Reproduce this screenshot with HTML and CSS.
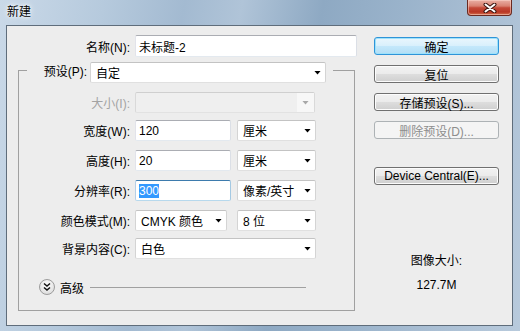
FILE: index.html
```html
<!DOCTYPE html>
<html>
<head>
  <meta charset="utf-8">
  <title>新建</title>
  <link rel="stylesheet" href="styles.css">
</head>
<body>
  <div class="window">
    <div class="titlebar">
      <span class="title">新建</span>
      <span class="close">
        <svg width="14" height="10" viewBox="0 0 14 10">
          <path d="M2.5 1.5 L11.5 8.5 M11.5 1.5 L2.5 8.5" stroke="#3b1510" stroke-width="4" stroke-linecap="round"/>
          <path d="M2.5 1.5 L11.5 8.5 M11.5 1.5 L2.5 8.5" stroke="#fff" stroke-width="2" stroke-linecap="round"/>
        </svg>
      </span>
    </div>

    <div class="client">
      <!-- 左侧表单 -->
      <div class="form">
        <div class="row name-row">
          <label class="lbl">名称(N):</label>
          <div class="field name-field">未标题-2</div>
        </div>

        <fieldset class="group">
          <legend class="group-head">
            <div class="head-inner">
              <label class="lbl head-lbl">预设(P):</label>
              <div class="combo preset-combo"><span>自定</span><i class="arrow"></i></div>
            </div>
          </legend>

          <div class="row first-row">
            <label class="lbl disabled">大小(I):</label>
            <div class="combo combo-disabled size-combo"><span></span><span class="drop"><i class="arrow"></i></span></div>
          </div>

          <div class="row">
            <label class="lbl">宽度(W):</label>
            <div class="field num-field">120</div>
            <div class="combo unit-combo"><span>厘米</span><i class="arrow"></i></div>
          </div>

          <div class="row">
            <label class="lbl">高度(H):</label>
            <div class="field num-field">20</div>
            <div class="combo unit-combo"><span>厘米</span><i class="arrow"></i></div>
          </div>

          <div class="row">
            <label class="lbl">分辨率(R):</label>
            <div class="field num-field focused"><span class="sel">300</span></div>
            <div class="combo unit-combo"><span>像素/英寸</span><i class="arrow"></i></div>
          </div>

          <div class="row">
            <label class="lbl">颜色模式(M):</label>
            <div class="combo mode-combo"><span>CMYK 颜色</span><i class="arrow"></i></div>
            <div class="combo bits-combo"><span>8 位</span><i class="arrow"></i></div>
          </div>

          <div class="row last-row">
            <label class="lbl">背景内容(C):</label>
            <div class="combo bg-combo"><span>白色</span><i class="arrow"></i></div>
          </div>

          <div class="advanced">
            <svg class="adv-btn" width="16" height="16" viewBox="0 0 16 16">
              <defs>
                <radialGradient id="advg" cx="50%" cy="35%" r="65%">
                  <stop offset="0" stop-color="#ffffff"/>
                  <stop offset="1" stop-color="#dcdcdc"/>
                </radialGradient>
              </defs>
              <circle cx="8" cy="8" r="7.5" fill="url(#advg)" stroke="#9c9c9c"/>
              <path d="M5 4.5 L8 7 L11 4.5 M5 8.5 L8 11 L11 8.5" fill="none" stroke="#111" stroke-width="1.5"/>
            </svg>
            <span class="adv-text">高级</span>
            <span class="adv-line"></span>
          </div>
        </fieldset>
      </div>

      <!-- 右侧按钮 -->
      <div class="side">
        <div class="btn btn-default">确定</div>
        <div class="btn">复位</div>
        <div class="btn">存储预设(S)...</div>
        <div class="btn btn-disabled">删除预设(D)...</div>
        <div class="btn btn-device">Device Central(E)...</div>

        <div class="size-info">
          <div>图像大小:</div>
          <div>127.7M</div>
        </div>
      </div>
    </div>
  </div>
</body>
</html>
```

FILE: styles.css
```css
body {
  margin: 0;
  font: 12px "Liberation Sans", "Noto Sans CJK SC", sans-serif;
  color: #000;
}

.window {
  width: 520px;
  height: 331px;
  overflow: hidden;
  background: linear-gradient(100deg, #cad9e8 0%, #b6cadd 18%, #a3bad1 32%, #b0c4d8 42%, #8ea9c3 56%, #9ab3cb 70%, #a9bed3 84%, #b8cadc 100%);
}

.titlebar {
  height: 25px;
  display: flex;
  justify-content: space-between;
  align-items: flex-start;
}

.title {
  margin: 5px 0 0 7px;
  line-height: 15px;
  text-shadow: 0 0 6px #fff, 0 0 3px #fff;
}

.close {
  width: 43px;
  height: 15px;
  margin-right: 8px;
  border: 1px solid #6a2a21;
  border-top: 0;
  border-radius: 0 0 4px 4px;
  display: flex;
  align-items: center;
  justify-content: center;
  background: linear-gradient(#e9b0a4 0%, #d98272 40%, #c44a38 52%, #b93624 80%, #d3724f 100%);
  box-shadow: inset 0 0 0 1px rgba(255, 220, 210, 0.5);
}

.client {
  margin-left: 6px;
  width: 505px;
  height: 299px;
  border: 1px solid #5f6d7b;
  background: #ededed;
  display: flex;
}

/* 表单 */
.form {
  width: 350px;
}

.row {
  display: flex;
  align-items: center;
  height: 21px;
  margin-top: 9px;
}

.lbl {
  width: 111px;
  margin-right: 5px;
  text-align: right;
  white-space: nowrap;
}

.lbl.disabled {
  color: #a3a3a3;
}

.name-row {
  height: 22px;
}

.name-row .lbl {
  width: 123px;
}

.field {
  box-sizing: border-box;
  height: 21px;
  background: #fff;
  border: 1px solid;
  border-color: #abadb3 #dbdfe6 #e3e9ef #e2e3ea;
  border-radius: 2px;
  padding-left: 3px;
  display: flex;
  align-items: center;
  white-space: nowrap;
}

.name-field {
  width: 222px;
  height: 22px;
}

.num-field {
  width: 96px;
  margin-right: 6px;
}

.focused {
  border-color: #3d7bad #a4c9e3 #b7d9ed #b5cfe7;
}

.sel {
  background: #3399ff;
  color: #fff;
  line-height: 14px;
}

.combo {
  box-sizing: border-box;
  height: 21px;
  background: #fff;
  border: 1px solid;
  border-color: #c3c3c3 #d4d4d4 #e0e0e0 #d4d4d4;
  border-radius: 2px;
  padding: 0 4px 0 5px;
  display: flex;
  align-items: center;
  justify-content: space-between;
  white-space: nowrap;
}

.arrow {
  display: block;
  width: 7px;
  height: 4px;
  background: #000;
  clip-path: polygon(0 0, 100% 0, 50% 100%);
}

.preset-combo {
  width: 236px;
  flex: none;
}

.size-combo {
  width: 180px;
}

.unit-combo {
  width: 79px;
}

.mode-combo {
  width: 92px;
  margin-right: 10px;
}

.bits-combo {
  width: 79px;
}

.bg-combo {
  width: 181px;
}

.combo-disabled {
  background: #efefef;
  border-color: #cfcfcf #d9d9d9 #e2e2e2 #d9d9d9;
  padding: 0;
}

.combo-disabled .drop {
  width: 17px;
  height: 100%;
  background: #f7f7f7;
  display: flex;
  align-items: center;
  justify-content: center;
}

.combo-disabled .arrow {
  background: #a8a8a8;
}

/* 预设分组框 */
.group {
  margin: 5px 0 0 11px;
  width: 335px;
  padding: 0 0 15px 0;
  border: 1px solid #a0a0a0;
  min-width: 0;
}

.group-head {
  margin-left: 8px;
  padding: 0 7px 0 15px;
}

/* 标题行比下拉框矮一些，让分组框的边线落在 71px 左右 */
.head-inner {
  display: flex;
  align-items: flex-start;
  height: 17px;
}

.head-lbl {
  width: 45px;
  margin-right: 3px;
  line-height: 21px;
}

.first-row {
  margin-top: 13px;
}

.group .row:nth-of-type(2),
.last-row {
  margin-top: 7px;
}

.advanced {
  display: flex;
  align-items: center;
  margin-top: 20px;
  padding-left: 20px;
  height: 16px;
}

.adv-text {
  margin-left: 5px;
}

.adv-line {
  width: 216px;
  height: 1px;
  margin-left: 6px;
  background: #a0a0a0;
}

/* 右侧按钮 */
.side {
  width: 125px;
  margin-left: 17px;
  padding-top: 11px;
}

.btn {
  box-sizing: border-box;
  height: 18px;
  margin-bottom: 10px;
  border: 1px solid #707070;
  border-radius: 3px;
  background: linear-gradient(#f2f2f2 0%, #ebebeb 48%, #dddddd 52%, #cfcfcf 100%);
  box-shadow: inset 0 0 0 1px #fcfcfc;
  display: flex;
  align-items: center;
  justify-content: center;
  white-space: nowrap;
}

.btn-default {
  border-color: #2f94d8;
  background: linear-gradient(#eaf6fd 0%, #d9f0fc 48%, #c4e8fb 52%, #b3def5 100%);
  box-shadow: inset 0 0 0 1px #9ee2fb;
}

.btn-disabled {
  border-color: #adb2b5;
  background: #f4f4f4;
  box-shadow: none;
  color: #8d8d8d;
}

.btn-device {
  margin-top: 28px;
}

.size-info {
  margin-top: 64px;
  text-align: center;
  line-height: 24px;
}
```
